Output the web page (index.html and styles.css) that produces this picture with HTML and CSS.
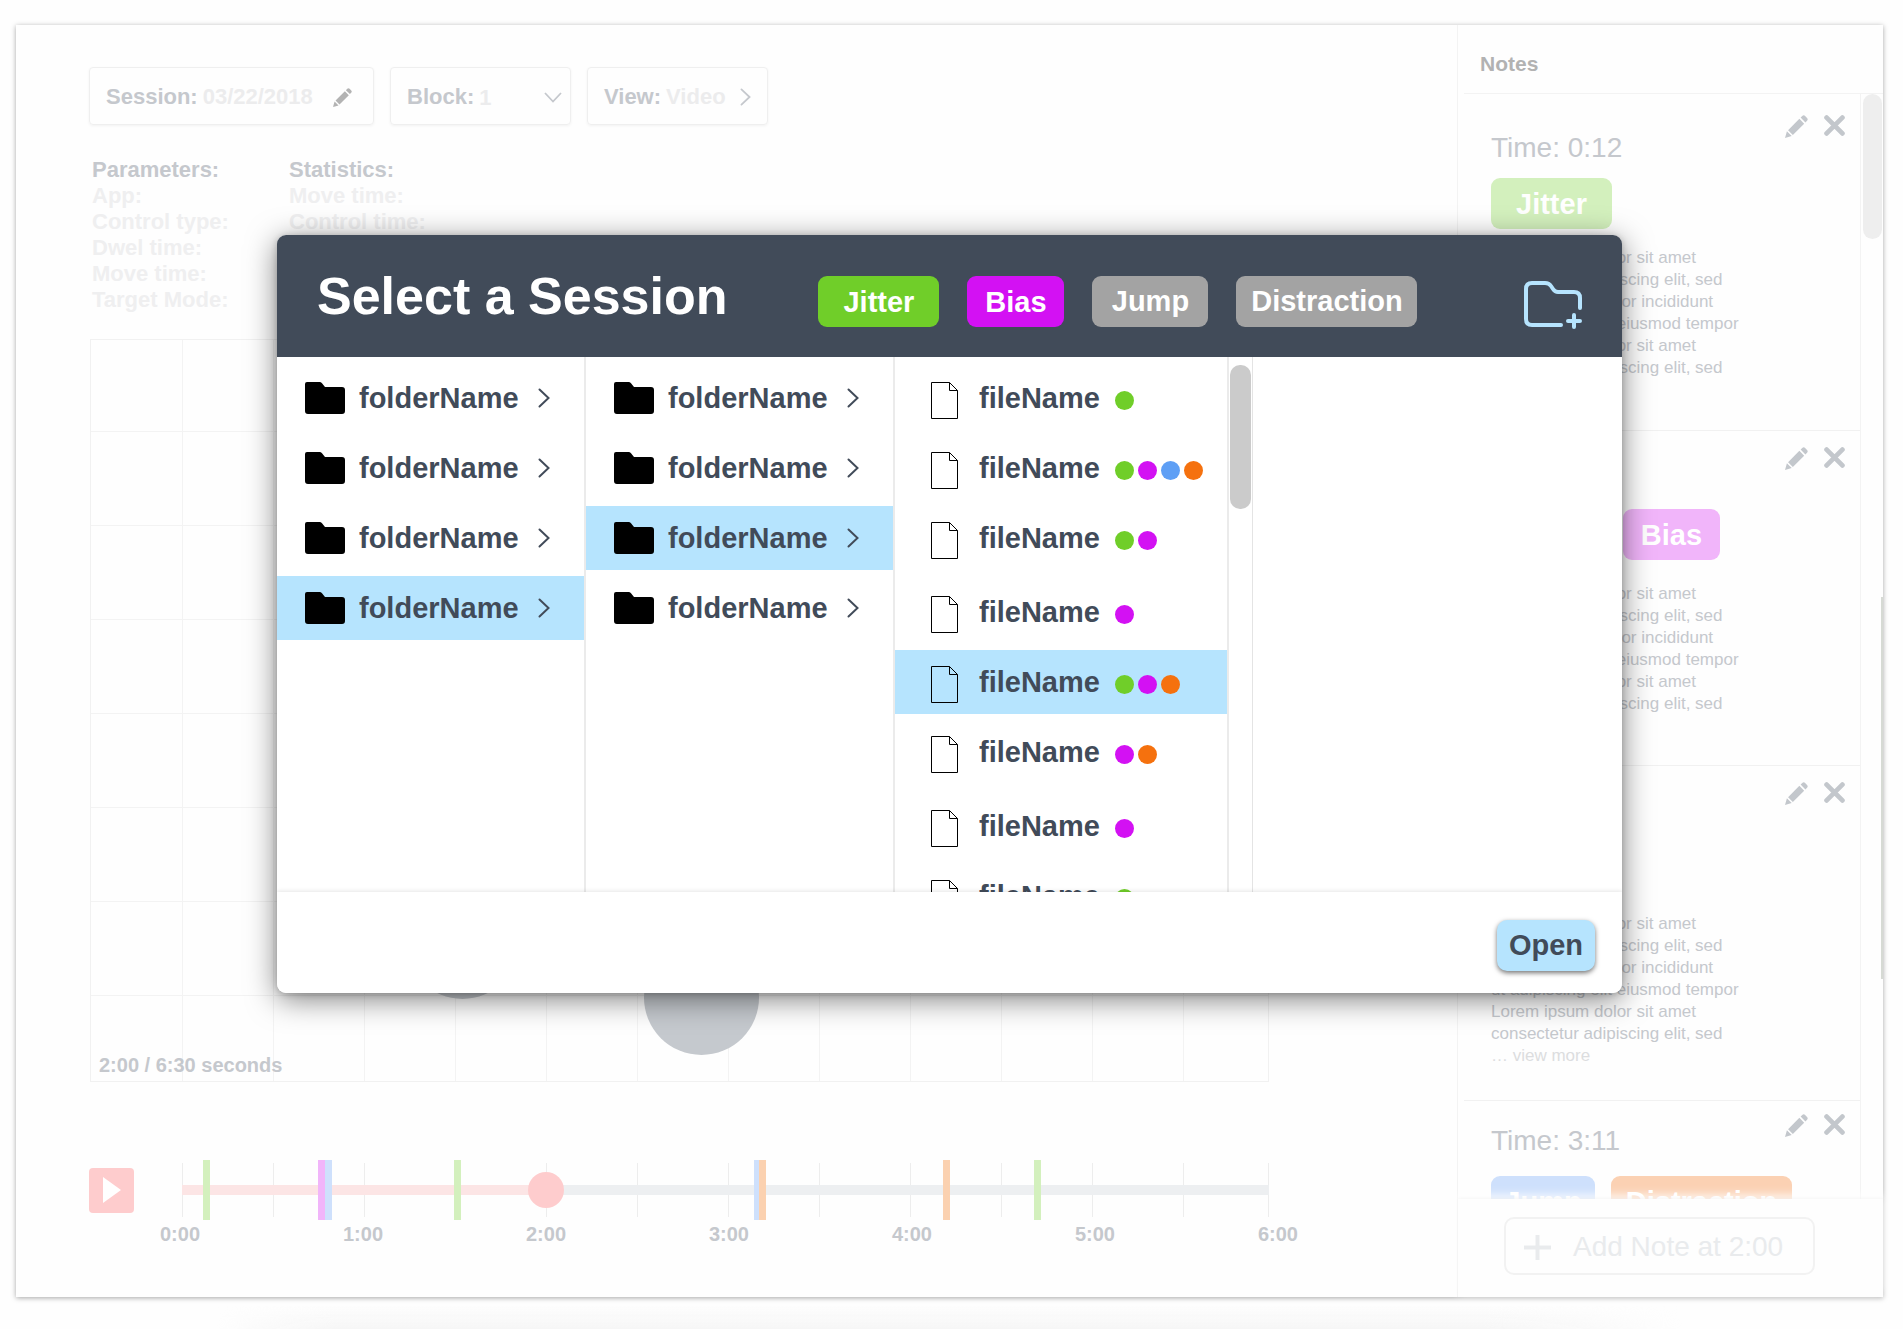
FILE: index.html
```html
<!DOCTYPE html>
<html lang="en">
<head>
<meta charset="utf-8">
<title>Select a Session</title>
<link rel="stylesheet" href="styles.css">
</head>
<body>
<svg class="defs" aria-hidden="true">
  <symbol id="pencil" viewBox="0 0 24 24"><path d="M0 24 2 17 7 22ZM3.2 15.8 15 4 20 9 8.2 20.8ZM16.3 2.7 18 1Q19.5-.4 21 1L23 3Q24.400 4.500 23 6L21.300 7.700Z"/></symbol>
  <symbol id="cross" viewBox="0 0 20 20"><path d="M2.500 2.500 17.500 17.500M17.500 2.500 2.500 17.500" fill="none" stroke="currentColor" stroke-width="4.600" stroke-linecap="round"/></symbol>
  <symbol id="chevron" viewBox="0 0 12 20"><path d="M1.500 1.500 10.500 10 1.500 18.500" fill="none" stroke="currentColor" stroke-width="2" stroke-linecap="round"/></symbol>
  <symbol id="folder" viewBox="0 0 40 32"><path d="M2 0H14.500Q16 0 17 1.300L20 5H37Q40 5 40 8V29Q40 32 37 32H3Q0 32 0 29V2Q0 0 2 0Z"/></symbol>
  <symbol id="file" viewBox="0 0 27 37"><path d="M.5.5H18.500L26.500 8.500V36.500H.5ZM18.500.5V8.500H26.500" fill="none" stroke="currentColor" stroke-width="1"/></symbol>
</svg>

<div class="window">
  <main class="workspace">
    <div class="toolbar">
      <div class="field field--session"><b>Session:</b> <span class="value">03/22/2018</span>
        <button class="icon-btn" aria-label="Edit session"><svg width="19" height="19"><use href="#pencil"/></svg></button></div>
      <div class="field"><label for="block">Block:</label>
        <select id="block" class="value"><option>1</option></select>
        <svg class="down" width="18" height="11" viewBox="0 0 18 11" aria-hidden="true"><path d="M1 1 9 9.500 17 1" fill="none" stroke="currentColor" stroke-width="1.800"/></svg></div>
      <button class="field"><b>View:</b> <span class="value">Video</span>
        <svg class="right" width="11" height="18" aria-hidden="true"><use href="#chevron"/></svg></button>
    </div>

    <div class="info">
      <section><h2>Parameters:</h2><ul><li>App:</li><li>Control type:</li><li>Dwel time:</li><li>Move time:</li><li>Target Mode:</li></ul></section>
      <section><h2>Statistics:</h2><ul><li>Move time:</li><li>Control time:</li></ul></section>
    </div>

    <div class="chart">
      <span class="target target--a"></span>
      <span class="target target--b"></span>
      <p class="elapsed">2:00 / 6:30 seconds</p>
    </div>

    <div class="timeline">
      <button class="play" aria-label="Play"><svg width="18" height="26" viewBox="0 0 18 26"><path d="M0 0 18 13 0 26Z"/></svg></button>
      <div class="rail">
        <div class="ticks"></div>
        <div class="track"></div>
        <span class="mark jitter" style="left:1.9%"></span>
        <span class="mark bias" style="left:12.5%"></span>
        <span class="mark jump" style="left:13.200%"></span>
        <span class="mark jitter" style="left:25%"></span>
        <span class="mark jump" style="left:52.600%"></span>
        <span class="mark distraction" style="left:53.100%"></span>
        <span class="mark distraction" style="left:70%"></span>
        <span class="mark jitter" style="left:78.400%"></span>
        <input type="range" min="0" max="6" step="any" value="1.978" aria-label="Playback position">
      </div>
    </div>
    <div class="times"><span>0:00</span><span>1:00</span><span>2:00</span><span>3:00</span><span>4:00</span><span>5:00</span><span>6:00</span></div>
  </main>

  <aside class="notes">
    <h2 class="notes-title">Notes</h2>
    <div class="notes-body">
      <div class="notes-list">
        <article class="note note--first">
          <header><h3>Time: 0:12</h3><div class="actions"><button class="icon-btn" aria-label="Edit note"><svg width="23" height="23"><use href="#pencil"/></svg></button><button class="icon-btn" aria-label="Delete note"><svg width="21" height="21"><use href="#cross"/></svg></button></div></header>
          <div class="tags"><span class="tag tag--jitter">Jitter</span></div>
          <p>Lorem ipsum dolor sit amet<br>consectetur adipiscing elit, sed<br>do eiusmod tempor incididunt<br>ut adipiscing elit eiusmod tempor<br>Lorem ipsum dolor sit amet<br>consectetur adipiscing elit, sed<br><a href="#">… view more</a></p>
        </article>
        <article class="note">
          <header><h3>Time: 0:45</h3><div class="actions"><button class="icon-btn" aria-label="Edit note"><svg width="23" height="23"><use href="#pencil"/></svg></button><button class="icon-btn" aria-label="Delete note"><svg width="21" height="21"><use href="#cross"/></svg></button></div></header>
          <div class="tags tags--wide"><span class="tag tag--jump">Jump</span><span class="tag tag--bias">Bias</span></div>
          <p>Lorem ipsum dolor sit amet<br>consectetur adipiscing elit, sed<br>do eiusmod tempor incididunt<br>ut adipiscing elit eiusmod tempor<br>Lorem ipsum dolor sit amet<br>consectetur adipiscing elit, sed<br><a href="#">… view more</a></p>
        </article>
        <article class="note note--short">
          <header><h3>Time: 1:30</h3><div class="actions"><button class="icon-btn" aria-label="Edit note"><svg width="23" height="23"><use href="#pencil"/></svg></button><button class="icon-btn" aria-label="Delete note"><svg width="21" height="21"><use href="#cross"/></svg></button></div></header>
          <div class="tags"><span class="tag tag--jitter">Jitter</span></div>
          <p>Lorem ipsum dolor sit amet<br>consectetur adipiscing elit, sed<br>do eiusmod tempor incididunt<br>ut adipiscing elit eiusmod tempor<br>Lorem ipsum dolor sit amet<br>consectetur adipiscing elit, sed<br><a href="#">… view more</a></p>
        </article>
        <article class="note note--tight">
          <header><h3>Time: 3:11</h3><div class="actions"><button class="icon-btn" aria-label="Edit note"><svg width="23" height="23"><use href="#pencil"/></svg></button><button class="icon-btn" aria-label="Delete note"><svg width="21" height="21"><use href="#cross"/></svg></button></div></header>
          <div class="tags"><span class="tag tag--jump">Jump</span><span class="tag tag--distraction">Distraction</span></div>
        </article>
      </div>
      <div class="notes-scroll"><span></span></div>
    </div>
    <div class="notes-footer">
      <button class="add-note"><svg width="27" height="25" viewBox="0 0 27 25" aria-hidden="true"><path d="M0 12.500H27M13.500 0V25" stroke="currentColor" stroke-width="4"/></svg>Add Note at 2:00</button>
    </div>
  </aside>
  <span class="edge"></span>

  <div class="overlay">
    <div class="dialog" role="dialog" aria-labelledby="dialog-title">
      <header class="dialog-head">
        <h1 id="dialog-title">Select a Session</h1>
        <div class="filters">
          <button class="tag tag--jitter on" aria-pressed="true">Jitter</button>
          <button class="tag tag--bias on" aria-pressed="true">Bias</button>
          <button class="tag tag--jump off" aria-pressed="false">Jump</button>
          <button class="tag tag--distraction off" aria-pressed="false">Distraction</button>
        </div>
        <button class="icon-btn new-folder" aria-label="New folder"><svg width="58" height="48" viewBox="0 0 58 48"><path fill="none" stroke="currentColor" stroke-width="4" stroke-linecap="round" d="M56 27V17Q56 11 50 11H34Q31 11 29 8L27 5Q25 2 21 2H8Q2 2 2 8V38Q2 44 8 44H37M50 34V46M44 40H56"/></svg></button>
      </header>
      <div class="columns">
        <ul class="column">
          <li><button class="row"><svg width="40" height="32"><use href="#folder"/></svg>folderName<svg class="more" width="12" height="20"><use href="#chevron"/></svg></button></li>
          <li><button class="row"><svg width="40" height="32"><use href="#folder"/></svg>folderName<svg class="more" width="12" height="20"><use href="#chevron"/></svg></button></li>
          <li><button class="row"><svg width="40" height="32"><use href="#folder"/></svg>folderName<svg class="more" width="12" height="20"><use href="#chevron"/></svg></button></li>
          <li><button class="row selected"><svg width="40" height="32"><use href="#folder"/></svg>folderName<svg class="more" width="12" height="20"><use href="#chevron"/></svg></button></li>
        </ul>
        <ul class="column">
          <li><button class="row"><svg width="40" height="32"><use href="#folder"/></svg>folderName<svg class="more" width="12" height="20"><use href="#chevron"/></svg></button></li>
          <li><button class="row"><svg width="40" height="32"><use href="#folder"/></svg>folderName<svg class="more" width="12" height="20"><use href="#chevron"/></svg></button></li>
          <li><button class="row selected"><svg width="40" height="32"><use href="#folder"/></svg>folderName<svg class="more" width="12" height="20"><use href="#chevron"/></svg></button></li>
          <li><button class="row"><svg width="40" height="32"><use href="#folder"/></svg>folderName<svg class="more" width="12" height="20"><use href="#chevron"/></svg></button></li>
        </ul>
        <ul class="column column--files">
          <li><button class="row"><svg width="27" height="37"><use href="#file"/></svg>fileName<span class="dots"><i class="jitter"></i></span></button></li>
          <li><button class="row"><svg width="27" height="37"><use href="#file"/></svg>fileName<span class="dots"><i class="jitter"></i><i class="bias"></i><i class="jump"></i><i class="distraction"></i></span></button></li>
          <li><button class="row"><svg width="27" height="37"><use href="#file"/></svg>fileName<span class="dots"><i class="jitter"></i><i class="bias"></i></span></button></li>
          <li><button class="row"><svg width="27" height="37"><use href="#file"/></svg>fileName<span class="dots"><i class="bias"></i></span></button></li>
          <li><button class="row selected"><svg width="27" height="37"><use href="#file"/></svg>fileName<span class="dots"><i class="jitter"></i><i class="bias"></i><i class="distraction"></i></span></button></li>
          <li><button class="row"><svg width="27" height="37"><use href="#file"/></svg>fileName<span class="dots"><i class="bias"></i><i class="distraction"></i></span></button></li>
          <li><button class="row"><svg width="27" height="37"><use href="#file"/></svg>fileName<span class="dots"><i class="bias"></i></span></button></li>
          <li><button class="row"><svg width="27" height="37"><use href="#file"/></svg>fileName<span class="dots"><i class="jitter"></i></span></button></li>
        </ul>
        <div class="column-scroll"><span></span></div>
      </div>
      <footer class="dialog-foot"><button class="open">Open</button></footer>
    </div>
  </div>
</div>
<div class="floor"></div>
</body>
</html>
```

FILE: styles.css
```css
:root {
  --slate: #414b59;
  --sky: #b6e4fe;
  --faded: #c5c8cd;
  --fainter: #ececed;
  --line: #f3f3f3;
}

* { box-sizing: border-box; margin: 0; padding: 0; }

body {
  height: 100vh;
  display: flex;
  flex-direction: column;
  overflow: hidden;
  padding: 25px 20px 0 16px;
  background: #fefefe;
  color: var(--faded);
  font-family: "Liberation Sans", Arial, Helvetica, sans-serif;
}

ul { list-style: none; }
svg { display: block; flex: none; fill: currentColor; }
button, select, input { font: inherit; color: inherit; background: none; border: 0; }
button { cursor: pointer; }
a { color: #dcdddf; text-decoration: none; }
.defs { position: absolute; width: 0; height: 0; }
.icon-btn { display: flex; }

.window {
  position: relative;
  flex: 1;
  min-height: 0;
  display: flex;
  background: #fefefe;
  box-shadow: 0 1px 5px rgba(0, 0, 0, .35);
}

.floor {
  flex: none;
  height: 32px;
  margin: 0 200px;
  background: linear-gradient(transparent 25%, #f6f6f6);
  -webkit-mask-image: linear-gradient(90deg, transparent, #000 120px calc(100% - 200px), transparent);
  mask-image: linear-gradient(90deg, transparent, #000 120px calc(100% - 200px), transparent);
}

/* Workspace */
.workspace {
  flex: 1;
  min-width: 0;
  display: flex;
  flex-direction: column;
  padding: 42px 188px 51px 73px;
}

.toolbar { display: flex; gap: 16px; font-size: 22px; font-weight: bold; }

.field {
  position: relative;
  display: flex;
  align-items: center;
  gap: 5px;
  width: 181px;
  height: 58px;
  padding: 2px 16px 0;
  border: 1px solid #efefef;
  border-radius: 4px;
  box-shadow: 0 1px 3px rgba(0, 0, 0, .05);
}
.field--session { width: 285px; }
.field .value { color: var(--fainter); }
.field select { flex: 1; appearance: none; font-weight: bold; }
.field .icon-btn { margin-left: auto; margin-right: 5px; color: #b3b3b3; }
.field .down { margin-right: -8px; }
.field .right { margin-left: auto; }

.info {
  display: flex;
  margin: 32px 0 26px 3px;
  font-size: 22px;
  line-height: 26px;
  font-weight: bold;
}
.info section { width: 197px; white-space: nowrap; }
.info h2 { font-size: 22px; }
.info li { color: #efeff0; }

.chart {
  position: relative;
  flex: 1;
  display: flex;
  align-items: flex-end;
  margin-left: 1px;
  padding: 0 0 4px 8px;
  border: 1px solid #f1f1f1;
  background-image:
    repeating-linear-gradient(90deg, transparent 0 90px, var(--line) 90px 91px),
    repeating-linear-gradient(transparent 0 93px, var(--line) 93px 94px);
  background-position: 1px 0, 0 -2px;
}
.elapsed { font-size: 20px; line-height: 24px; font-weight: bold; }
.target { position: absolute; width: 115px; height: 115px; border-radius: 50%; background: #c5c9ce; }
.target--a { left: 314px; top: 544px; }
.target--b { left: 553px; top: 600px; }

.timeline { display: flex; align-items: center; gap: 48px; margin-top: 78px; height: 60px; }
.play {
  flex: none;
  display: grid;
  place-items: center;
  width: 45px;
  height: 45px;
  border-radius: 4px;
  background: #fecccd;
  color: #fff;
}
.rail { position: relative; flex: 1; height: 60px; display: grid; align-items: center; }
.rail > .ticks, .rail > .track, .rail > input { grid-area: 1 / 1; }
.ticks {
  height: 54px;
  border-right: 1px solid #ededed;
  background: repeating-linear-gradient(90deg, #ededed 0 1px, transparent 1px 91px);
}
.track { height: 10px; background: linear-gradient(90deg, #fce5e5 33.5%, #edeff1 33.5%); }
.mark { position: absolute; top: 0; width: 7px; height: 60px; }
.mark.jitter { background: #d3f0bd; }
.mark.bias { background: #f1b5fa; }
.mark.jump { background: #cee0fc; }
.mark.distraction { background: #fbd1b0; }
.rail input { appearance: none; position: relative; width: 100%; height: 36px; }
.rail input::-webkit-slider-thumb {
  appearance: none;
  width: 36px;
  height: 36px;
  border-radius: 50%;
  background: #fecccd;
}
.times {
  display: flex;
  justify-content: space-between;
  margin: 2px -29px 0 71px;
  font-size: 20px;
  line-height: 24px;
  font-weight: bold;
}

/* Notes */
.notes { flex: none; width: 426px; display: flex; flex-direction: column; border-left: 1px solid var(--line); }
.notes-title { padding: 27px 0 17px 22px; font-size: 21px; line-height: 24px; color: #b2b2b2; }
.notes-body { flex: 1; min-height: 0; display: flex; margin-left: 6px; border-top: 1px solid var(--line); }
.notes-list { flex: 1; min-width: 0; overflow: hidden; }
.notes-scroll { width: 23px; padding: 0 1px 0 2px; border-left: 1px solid var(--line); }
.notes-scroll span { display: block; height: 145px; border-radius: 10px; background: #eeeeee; }

.note { height: 335px; padding: 16px 15px 0 27px; border-bottom: 1px solid #f1f1f1; }
.note header { display: flex; justify-content: space-between; }
.note h3 { margin-top: 11px; font-size: 28px; line-height: 32px; font-weight: normal; }
.note p { margin-top: 23px; font-size: 17px; line-height: 22px; white-space: nowrap; }
.note--first { height: 337px; padding-top: 21px; }
.note--first h3 { margin-top: 17px; }
.note--first .tags { margin-top: 14px; }
.note--first p { margin-top: 18px; }
.note--short p { margin-top: 18px; }
.note--tight { padding-top: 13px; }
.note--tight .tags { margin-top: 19px; }
.actions { display: flex; gap: 16px; height: 23px; color: #c3c7cc; }
.tags { display: flex; gap: 16px; margin-top: 19px; }
.tags--wide { gap: 28px; }

.tag {
  display: flex;
  align-items: center;
  justify-content: center;
  height: 51px;
  padding-top: 2px;
  border-radius: 9px;
  color: #fff;
  font-size: 29px;
  font-weight: bold;
}
.tag--jitter { width: 121px; background: #d3f0bd; }
.tag--bias { width: 97px; background: #f1b5fa; }
.tag--jump { width: 104px; background: #cee0fc; }
.tag--distraction { width: 181px; background: #fbd1b3; }

.notes-footer {
  position: relative;
  display: flex;
  padding: 18px 68px 22px 46px;
  background: #fefefe;
  box-shadow: 0 -1px 3px rgba(0, 0, 0, .03), 0 -3px 10px #fefefe;
}
.add-note {
  flex: 1;
  display: flex;
  align-items: center;
  gap: 22px;
  height: 58px;
  padding: 2px 18px 0;
  border: 2px solid #f2f2f2;
  border-radius: 10px;
  color: #e9ebed;
  font-size: 28px;
  white-space: nowrap;
}
.edge { position: absolute; right: 0; top: 45%; width: 2px; height: 30%; background: #d6dad4; }

/* Session dialog */
.overlay { position: absolute; inset: 0; padding: 210px 261px; }
.dialog {
  overflow: hidden;
  border-radius: 9px;
  background: #fff;
  color: var(--slate);
  box-shadow: 0 6px 30px rgba(0, 0, 0, .5), 0 1px 6px rgba(0, 0, 0, .2);
}
.dialog-head {
  display: flex;
  align-items: center;
  height: 122px;
  padding: 0 40px;
  background: var(--slate);
  color: #fff;
}
.dialog-head h1 { font-size: 52px; line-height: 60px; white-space: nowrap; }
.filters { display: flex; gap: 28px; margin: 11px 0 0 91px; }
.filters .off { padding-top: 0; background: #a3a3a3; }
.filters .tag--jump { width: 116px; }
.filters .tag--jitter { background: #70ce29; }
.filters .tag--bias { background: #d311f3; }
.new-folder { margin: 18px 0 0 auto; color: var(--sky); }

.columns { display: flex; height: 535px; overflow: hidden; }
.column {
  flex: none;
  width: 309px;
  display: flex;
  flex-direction: column;
  gap: 6px;
  padding-top: 9px;
  border-right: 2px solid #ebebeb;
}
.column--files { width: 334px; }
.column--files li:nth-child(3n + 4) { margin-top: 4px; }
.row {
  display: flex;
  align-items: center;
  width: 100%;
  height: 64px;
  padding: 0 34px 0 28px;
  font-size: 29px;
  font-weight: bold;
}
.row svg { color: #000; margin-right: 14px; }
.row .more { color: var(--slate); margin: 0 0 0 auto; }
.column--files .row { padding-left: 36px; }
.column--files .row svg { margin: 4px 21px 0 0; }
.selected { background: var(--sky); }
.dots { display: flex; gap: 4px; padding: 4px 0 0 15px; }
.dots i { width: 19px; height: 19px; border-radius: 50%; }
.dots .jitter { background: #70ce29; }
.dots .bias { background: #d311f3; }
.dots .jump { background: #5e9ff5; }
.dots .distraction { background: #f5710e; }
.column-scroll { width: 24px; padding: 8px 1px; border-right: 1px solid #e4e4e4; }
.column-scroll span { display: block; height: 144px; border-radius: 10px; background: #cbcbcb; }

.dialog-foot {
  position: relative;
  display: flex;
  justify-content: flex-end;
  padding: 28px 27px 22px;
  background: #fff;
  box-shadow: 0 -1px 4px rgba(0, 0, 0, .1);
}
.open {
  width: 98px;
  height: 51px;
  border-radius: 10px;
  background: var(--sky);
  box-shadow: 0 2px 5px rgba(0, 0, 0, .55);
  font-size: 29px;
  font-weight: bold;
}
```
